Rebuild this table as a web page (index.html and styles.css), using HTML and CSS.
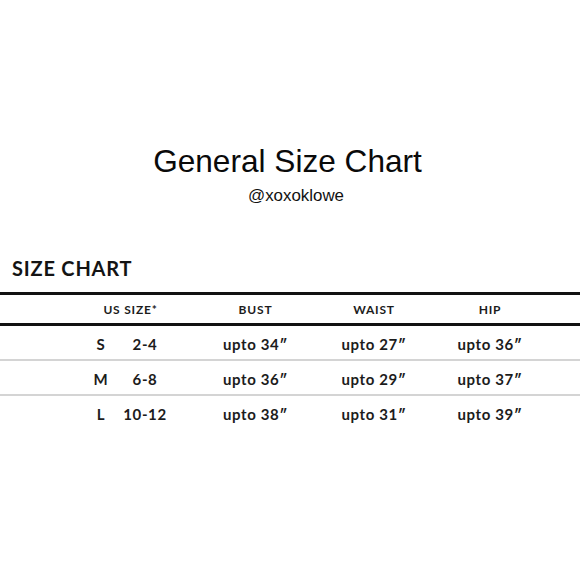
FILE: index.html
```html
<!DOCTYPE html>
<html>
<head>
<meta charset="utf-8">
<link rel="stylesheet" href="styles.css">
</head>
<body>
  <header class="intro">
    <h1 class="title">General Size Chart</h1>
    <p class="handle">@xoxoklowe</p>
  </header>
  <section class="chart">
    <h2 class="chart-title">SIZE CHART</h2>
    <div class="head-row">
      <span class="cell">US SIZE*</span>
      <span class="cell">BUST</span>
      <span class="cell">WAIST</span>
      <span class="cell">HIP</span>
    </div>
    <div class="row">
      <span class="cell">S</span>
      <span class="cell">2-4</span>
      <span class="cell">upto 34″</span>
      <span class="cell">upto 27″</span>
      <span class="cell">upto 36″</span>
    </div>
    <div class="row">
      <span class="cell">M</span>
      <span class="cell">6-8</span>
      <span class="cell">upto 36″</span>
      <span class="cell">upto 29″</span>
      <span class="cell">upto 37″</span>
    </div>
    <div class="row last">
      <span class="cell">L</span>
      <span class="cell">10-12</span>
      <span class="cell">upto 38″</span>
      <span class="cell">upto 31″</span>
      <span class="cell">upto 39″</span>
    </div>
  </section>
</body>
</html>
```

FILE: styles.css
```css
html, body {
  margin: 0;
  padding: 0;
  background: #ffffff;
}

body {
  width: 580px;
  height: 580px;
  overflow: hidden;
  color: #111;
}

.intro {
  padding-top: 146px;
  text-align: center;
  font-family: "Liberation Sans", Arial, sans-serif;
}

.title {
  margin: 0;
  font-size: 31.6px;
  line-height: 1;
  font-weight: normal;
  color: #0a0a0a;
  padding-right: 5px;
}

.handle {
  margin: 10px 0 0;
  font-size: 16.9px;
  line-height: 1;
  color: #111;
  padding-left: 12px;
}

.chart {
  font-family: Lato, "Open Sans", sans-serif;
  font-weight: 700;
  color: #1c1c1c;
}

.chart-title {
  margin: 0 0 14px;
  padding: 53.5px 0 0 12px;
  font-size: 20px;
  line-height: 1;
  font-weight: 700;
  letter-spacing: 0.8px;
  color: #141414;
}

.head-row {
  display: grid;
  grid-template-columns: 141px 109px 128px 104px;
  padding-left: 60px;
  border-top: 3px solid #111;
  border-bottom: 3px solid #111;
  height: 28px;
  box-sizing: content-box;
  font-size: 12px;
  line-height: 1;
  letter-spacing: 0.8px;
}

.head-row .cell {
  text-align: center;
  padding-top: 8.5px;
}

.row {
  display: grid;
  grid-template-columns: 36px 52px 169px 68px 164px;
  padding-left: 83px;
  height: 30px;
  padding-top: 3px;
  border-bottom: 2px solid #d4d4d4;
  font-size: 15px;
  line-height: 30px;
  box-sizing: content-box;
  letter-spacing: 0.6px;
}

.row.last {
  border-bottom: none;
}

.row .cell {
  text-align: center;
  white-space: nowrap;
}
```
